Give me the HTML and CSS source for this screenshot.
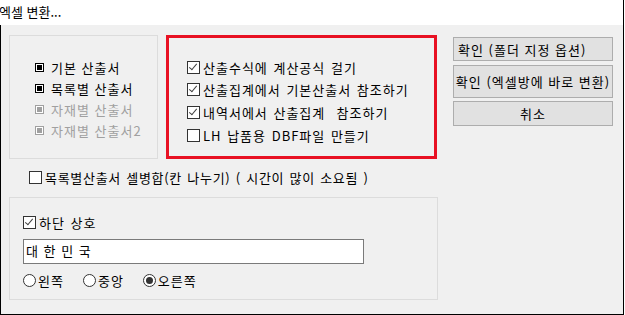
FILE: index.html
```html
<!DOCTYPE html>
<html lang="ko">
<head>
<meta charset="UTF-8">
<title>엑셀 변환...</title>
<link rel="stylesheet" href="styles.css">
</head>
<body>
<div class="titlebar">엑셀 변환...</div>
<div class="panel">
    <div class="toprow">
        <div class="group sheets">
            <div class="opt"><span class="sq"></span>기본 산출서</div>
            <div class="opt"><span class="sq"></span>목록별 산출서</div>
            <div class="opt off"><span class="sq"></span>자재별 산출서</div>
            <div class="opt off"><span class="sq"></span>자재별 산출서2</div>
        </div>
        <div class="redbox">
            <div class="chk r1"><span class="box on"></span>산출수식에 계산공식 걸기</div>
            <div class="chk r2"><span class="box on"></span>산출집계에서 기본산출서 참조하기</div>
            <div class="chk r3"><span class="box on"></span>내역서에서 산출집계&nbsp; 참조하기</div>
            <div class="chk r4"><span class="box"></span>LH 납품용 DBF파일 만들기</div>
        </div>
        <div class="buttons">
            <button class="btn b1">확인 (폴더 지정 옵션)</button>
            <button class="btn b2">확인 (엑셀방에 바로 변환)</button>
            <button class="btn b3">취소</button>
        </div>
    </div>
    <div class="chk merge"><span class="box"></span>목록별산출서 셀병합(칸 나누기) ( 시간이 많이 소요됨 )</div>
    <div class="group footer">
        <div class="chk"><span class="box on"></span>하단 상호</div>
        <div class="textbox">대 한 민 국</div>
        <div class="radios">
            <span class="radio"><span class="dot"></span>왼쪽</span>
            <span class="radio"><span class="dot"></span>중앙</span>
            <span class="radio"><span class="dot sel"></span>오른쪽</span>
        </div>
    </div>
</div>
</body>
</html>
```
FILE: styles.css
```css
body {
    margin: 0;
    background-color: #fff;
    font-family: "Noto Sans CJK KR", "Noto Sans", sans-serif;
    font-size: 13px;
    color: #000;
}
.titlebar {
    width: 624px;
    height: 25px;
    line-height: 24px;
    border-right: 1px solid #000;
    box-sizing: border-box;
    text-indent: -1px;
    background-color: #fff;
}
.panel {
    width: 624px;
    height: 290px;
    background-color: #f0f0f0;
    border: 1px solid #000;
    border-top: 0;
    padding-top: 10px;
    box-sizing: border-box;
    letter-spacing: 1px;
}
.toprow {
    display: flex;
    align-items: flex-start;
    padding-left: 8px;
}
.group {
    border: 1px solid #dcdcdc;
    box-sizing: border-box;
}
.sheets {
    width: 149px;
    height: 124px;
    padding: 21px 0 0 25px;
}
.opt {
    display: flex;
    align-items: center;
    height: 21px;
    white-space: nowrap;
}
.opt.off {
    color: #a0a0a0;
}
.sq {
    width: 9px;
    height: 9px;
    box-sizing: border-box;
    border: 1px solid #000;
    padding: 1px;
    margin-right: 7px;
    background-color: #fff;
}
.sq::after {
    content: "";
    display: block;
    width: 5px;
    height: 5px;
    background-color: #000;
}
.off .sq {
    border-color: #a0a0a0;
}
.off .sq::after {
    background-color: #a0a0a0;
}
.redbox {
    width: 271px;
    height: 124px;
    margin-left: 8px;
    border: 3px solid #e81123;
    box-sizing: border-box;
    padding: 18px 0 0 18px;
}
.chk {
    display: flex;
    align-items: center;
    height: 22px;
    white-space: nowrap;
    word-spacing: 1px;
}
.redbox .r3,
.redbox .r4 {
    margin-top: 1px;
}
.box {
    width: 13px;
    height: 13px;
    box-sizing: border-box;
    border: 1px solid #333;
    background-color: #fff;
    margin-right: 3px;
    flex: none;
    position: relative;
}
.box.on::after {
    content: "";
    position: absolute;
    left: 3px;
    top: 0px;
    width: 3px;
    height: 7px;
    border: solid #404040;
    border-width: 0 1.5px 1.5px 0;
    transform: rotate(40deg);
}
.buttons {
    display: flex;
    flex-direction: column;
    width: 160px;
    margin: 2px 0 0 16px;
}
.btn {
    font-family: inherit;
    font-size: 13px;
    letter-spacing: 1px;
    color: #000;
    background-color: #e1e1e1;
    border: 1px solid #adadad;
    padding: 0;
    white-space: nowrap;
    overflow: visible;
}
.b1 {
    height: 24px;
    text-align: left;
    padding-left: 4px;
}
.b2 {
    height: 33px;
    margin-top: 4px;
}
.b3 {
    height: 25px;
    margin-top: 3px;
}
.merge {
    height: 20px;
    margin: 8px 0 0 28px;
    letter-spacing: 0.7px;
}
.footer {
    width: 429px;
    height: 103px;
    margin: 10px 0 0 8px;
    padding: 14px 0 0 13px;
}
.footer .chk {
    height: 20px;
}
.textbox {
    width: 341px;
    height: 25px;
    box-sizing: border-box;
    margin-top: 7px;
    border: 1px solid #7a7a7a;
    background-color: #fff;
    line-height: 22px;
    padding-left: 2px;
}
.radios {
    display: flex;
    align-items: center;
    height: 20px;
    margin-top: 6px;
}
.radio {
    display: flex;
    align-items: center;
    margin-right: 19px;
}
.dot {
    width: 13px;
    height: 13px;
    box-sizing: border-box;
    border: 1px solid #333;
    border-radius: 50%;
    background-color: #fff;
    margin-right: 2px;
    display: flex;
    align-items: center;
    justify-content: center;
}
.dot.sel::after {
    content: "";
    width: 7px;
    height: 7px;
    border-radius: 50%;
    background-color: #333;
}
```
